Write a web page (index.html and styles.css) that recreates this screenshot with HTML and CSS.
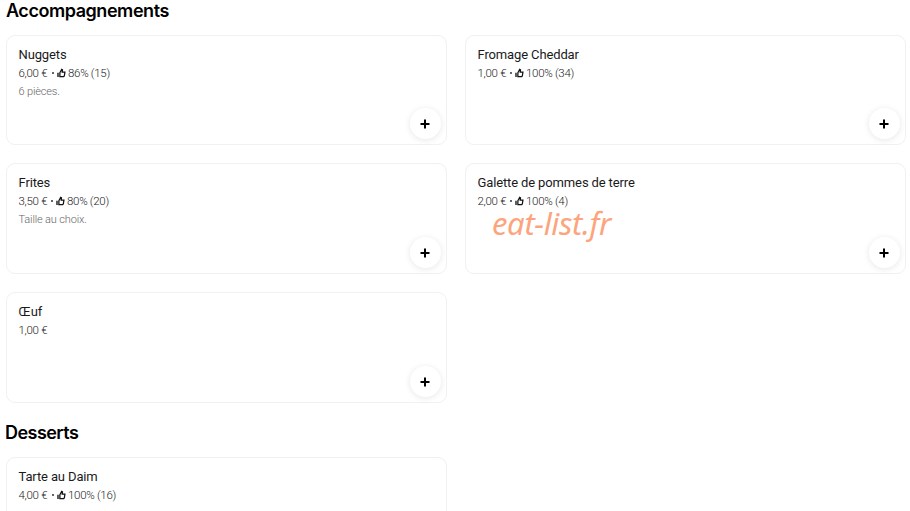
FILE: index.html
```html
<!DOCTYPE html>
<html lang="fr">
<head>
<meta charset="utf-8">
<title>Menu</title>
<link rel="stylesheet" href="styles.css">
</head>
<body>
<svg class="sprite">
  <symbol id="thumb" viewBox="0 0 10 10">
    <path d="M1.1 4.7v4.7" stroke-width="1.5"/>
    <path d="M3.2 4.8 5.2 1l.9.5-.3 2.6h3l-.6 4-.7.8H3.2z" stroke-width="1.4"/>
  </symbol>
  <symbol id="plus" viewBox="0 0 10 10">
    <path d="M5 .5v9M.5 5h9" stroke-width="2"/>
  </symbol>
</svg>
<main class="menu">
  <section>
    <h2 class="title">Accompagnements</h2>
    <ul class="grid">
      <li class="card">
        <h3 class="name">Nuggets</h3>
        <p class="meta"><span class="price">6,00 €</span><span class="dot"></span><svg class="thumb"><use href="#thumb"/></svg><span class="rating">86% (15)</span></p>
        <p class="desc">6 pièces.</p>
        <button class="add"><svg><use href="#plus"/></svg></button>
      </li>
      <li class="card">
        <h3 class="name">Fromage Cheddar</h3>
        <p class="meta"><span class="price one">1,00 €</span><span class="dot"></span><svg class="thumb"><use href="#thumb"/></svg><span class="rating">100% (34)</span></p>
        <button class="add"><svg><use href="#plus"/></svg></button>
      </li>
      <li class="card">
        <h3 class="name">Frites</h3>
        <p class="meta"><span class="price one">3,50 €</span><span class="dot"></span><svg class="thumb"><use href="#thumb"/></svg><span class="rating">80% (20)</span></p>
        <p class="desc">Taille au choix.</p>
        <button class="add"><svg><use href="#plus"/></svg></button>
      </li>
      <li class="card">
        <h3 class="name">Galette de pommes de terre</h3>
        <p class="meta"><span class="price one">2,00 €</span><span class="dot"></span><svg class="thumb"><use href="#thumb"/></svg><span class="rating">100% (4)</span></p>
        <span class="watermark">eat-list.fr</span>
        <button class="add"><svg><use href="#plus"/></svg></button>
      </li>
      <li class="card">
        <h3 class="name">Œuf</h3>
        <p class="meta"><span class="price one">1,00 €</span></p>
        <button class="add"><svg><use href="#plus"/></svg></button>
      </li>
    </ul>
  </section>
  <section>
    <h2 class="title desserts">Desserts</h2>
    <ul class="grid">
      <li class="card">
        <h3 class="name">Tarte au Daim</h3>
        <p class="meta"><span class="price">4,00 €</span><span class="dot"></span><svg class="thumb"><use href="#thumb"/></svg><span class="rating">100% (16)</span></p>
        <button class="add"><svg><use href="#plus"/></svg></button>
      </li>
    </ul>
  </section>
</main>
</body>
</html>
```
FILE: styles.css
```css
* { box-sizing: border-box; margin: 0; padding: 0; }
html, body { height: 511px; overflow: hidden; }
body { background: #fff; color: #111; font-family: Roboto, "Liberation Sans", sans-serif; }
.sprite { display: none; }
.menu { width: 900px; height: 511px; margin-left: 6px; overflow: hidden; }
.title { height: 35px; font: 600 18px/22px Inter, sans-serif; letter-spacing: -0.45px; color: #000; white-space: nowrap; }
.desserts { margin-top: 19px; margin-left: -1px; letter-spacing: -0.55px; }
.grid { display: grid; grid-template-columns: 441px 441px; grid-template-rows: 110px; grid-auto-rows: 111px; gap: 18px; list-style: none; }
.card { position: relative; padding: 10px 11.5px; border: 1px solid #f1f1f1; border-radius: 9px; }
.name { font-size: 13px; font-weight: 400; line-height: 17px; letter-spacing: -0.13px; color: #1a1a1a; white-space: nowrap; }
.meta { display: flex; align-items: center; height: 18px; margin-top: 1px; font-size: 11.5px; font-weight: 300; line-height: 18px; letter-spacing: -0.3px; color: #222; white-space: nowrap; }
.price { width: 32.5px; }
.price.one { width: 31.5px; }
.dot { width: 2px; height: 2px; margin: 0 3px 0 1px; border-radius: 1px; background: #333; }
.thumb { width: 9px; height: 10px; margin-right: 2px; fill: none; stroke: #111; }
.desc { margin-top: 1px; font-size: 11px; font-weight: 300; line-height: 18px; letter-spacing: -0.15px; color: #666; }
.add { position: absolute; right: 5.5px; bottom: 5px; display: flex; align-items: center; justify-content: center; width: 31px; height: 31px; border: 0; border-radius: 50%; background: #fff; box-shadow: 0 1px 6px rgba(0, 0, 0, 0.1); }
.add svg { width: 10px; height: 10px; stroke: #000; }
.watermark { position: absolute; left: 26px; top: 47px; font: italic 31px/25px "Noto Sans", sans-serif; letter-spacing: -0.35px; color: #fca57d; white-space: nowrap; }
```
